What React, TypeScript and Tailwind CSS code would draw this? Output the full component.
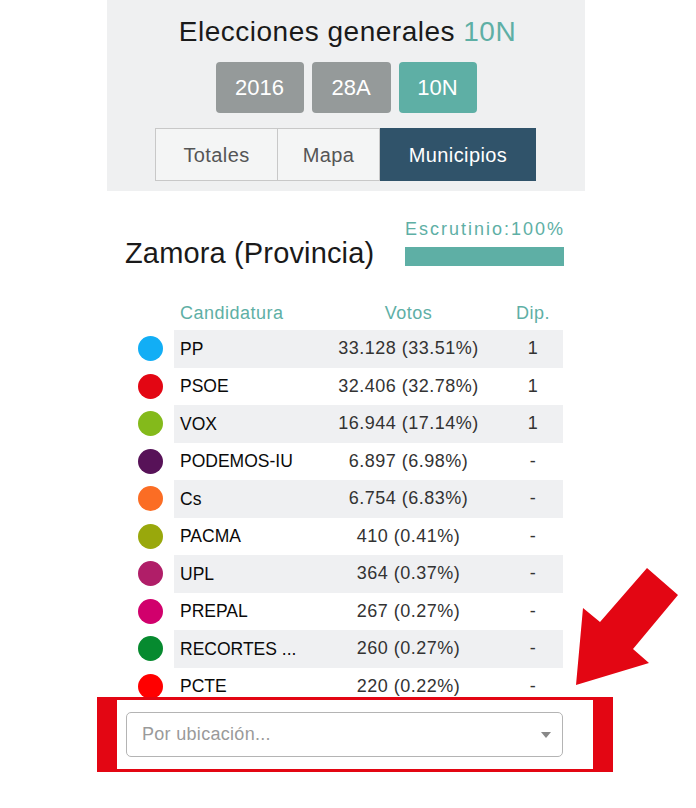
import React from "react";

const rows = [
  { name: "PP", color: "#12aef5", votes: "33.128 (33.51%)", dip: "1" },
  { name: "PSOE", color: "#e30613", votes: "32.406 (32.78%)", dip: "1" },
  { name: "VOX", color: "#84ba1b", votes: "16.944 (17.14%)", dip: "1" },
  { name: "PODEMOS-IU", color: "#571258", votes: "6.897 (6.98%)", dip: "-" },
  { name: "Cs", color: "#fb6d24", votes: "6.754 (6.83%)", dip: "-" },
  { name: "PACMA", color: "#99a80c", votes: "410 (0.41%)", dip: "-" },
  { name: "UPL", color: "#b01e68", votes: "364 (0.37%)", dip: "-" },
  { name: "PREPAL", color: "#d1006c", votes: "267 (0.27%)", dip: "-" },
  { name: "RECORTES ...", color: "#068a2f", votes: "260 (0.27%)", dip: "-" },
  { name: "PCTE", color: "#ff0000", votes: "220 (0.22%)", dip: "-" },
];

export default function App() {
  return (
    <div
      className="relative w-[696px] h-[808px] bg-white overflow-hidden"
      style={{ fontFamily: '"Liberation Sans", Arial, sans-serif' }}
    >
      <div className="ml-[107px] w-[478px]">
        {/* Header */}
        <div className="bg-[#eff0f1] h-[191px] flex flex-col items-center pt-[15px]">
          <div className="text-[28px] leading-[34px] tracking-[0.5px] text-[#1a1a1a] pl-[3px]">
            Elecciones generales <span className="text-[#5eafa5]">10N</span>
          </div>
          <div className="mt-[13px] flex gap-[8px] h-[51px]">
            <div className="w-[88px] h-[51px] rounded-[4px] bg-[#959a9a] text-white text-[22px] flex items-center justify-center">
              2016
            </div>
            <div className="w-[79px] h-[51px] rounded-[4px] bg-[#959a9a] text-white text-[22px] flex items-center justify-center">
              28A
            </div>
            <div className="w-[78px] h-[51px] rounded-[4px] bg-[#5eafa5] text-white text-[22px] flex items-center justify-center">
              10N
            </div>
          </div>
          <div className="mt-[15px] flex h-[53px] -ml-[1px]">
            <div className="w-[123px] h-[53px] border border-[#c8c8c8] bg-[#f4f5f5] text-[#555] text-[20px] tracking-[0.4px] flex items-center justify-center">
              Totales
            </div>
            <div className="w-[102px] h-[53px] border-y border-r border-[#c8c8c8] bg-[#f4f5f5] text-[#555] text-[20px] tracking-[0.4px] flex items-center justify-center">
              Mapa
            </div>
            <div className="w-[156px] h-[53px] bg-[#30536a] text-white text-[20px] tracking-[0.4px] flex items-center justify-center">
              Municipios
            </div>
          </div>
        </div>

        {/* Content */}
        <div className="pl-[18px] w-[457px]">
          <div className="flex items-start justify-between w-[439px]">
            <div className="mt-[45px] text-[29px] leading-[34px] tracking-[0.15px] text-[#1a1a1a]">
              Zamora (Provincia)
            </div>
            <div className="mt-[27px] w-[159px] flex flex-col">
              <div className="text-[18px] leading-[22px] tracking-[2px] text-[#5eafa5] whitespace-nowrap">
                Escrutinio:100%
              </div>
              <div className="mt-[7px] h-[19px] bg-[#5eafa5]" />
            </div>
          </div>

          {/* Table */}
          <div className="mt-[26px] w-[439px]">
            <div className="flex h-[34px] items-center text-[18px] tracking-[0.5px] text-[#5eafa5]">
              <div className="w-[49px]" />
              <div className="grid grid-cols-[136px_197px_52px] w-[389px] items-center">
                <div className="pl-[6px]">Candidatura</div>
                <div className="text-center">Votos</div>
                <div className="text-center">Dip.</div>
              </div>
            </div>
            {rows.map((r, i) => (
              <div key={r.name} className="flex h-[37.5px] items-center">
                <div className="w-[49px] flex items-center">
                  <div
                    className="ml-[13px] w-[25px] h-[25px] rounded-full"
                    style={{ backgroundColor: r.color }}
                  />
                </div>
                <div
                  className={
                    "grid grid-cols-[136px_197px_52px] w-[389px] h-full items-center text-[18px] tracking-[0.5px] " +
                    (i % 2 === 0 ? "bg-[#eff0f2]" : "bg-white")
                  }
                >
                  <div className="pl-[6px] text-[17.5px] tracking-normal text-[#0a0a0a] whitespace-nowrap">{r.name}</div>
                  <div className="text-center text-[#333] whitespace-nowrap">{r.votes}</div>
                  <div className="text-center text-[#333]">{r.dip}</div>
                </div>
              </div>
            ))}
          </div>

          {/* Select */}
          <div className="mt-[7px] ml-[1px] w-[437px] h-[45px] border border-[#b4b4b4] rounded-[5px] flex items-center justify-between pl-[15px] pr-[11px]">
            <span className="text-[18px] tracking-[0.3px] text-[#9a9a9a]">Por ubicación...</span>
            <svg width="10" height="6" viewBox="0 0 10 6">
              <path d="M0 0 H10 L5 6 Z" fill="#888" />
            </svg>
          </div>
        </div>
      </div>

      {/* Annotation: red box */}
      <div className="absolute left-[97px] top-[697px] w-[516px] h-[75px] border-[#e30613] border-t-[3px] border-b-[3px] border-l-[20px] border-r-[20px] pointer-events-none" />

      {/* Annotation: arrow */}
      <svg
        className="absolute left-0 top-0 pointer-events-none"
        width="696"
        height="808"
        viewBox="0 0 696 808"
      >
        <polygon
          points="576,685 583,608 600,622 647,568 678,595 633,649 649,663"
          fill="#e30613"
        />
      </svg>
    </div>
  );
}
